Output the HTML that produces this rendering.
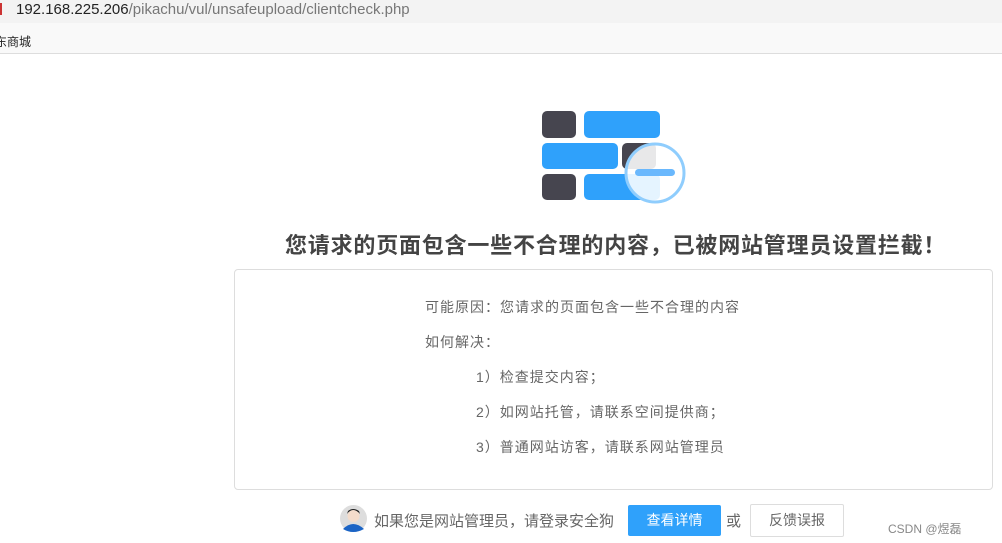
<!DOCTYPE html>
<html><head><meta charset="utf-8"><style>
*{margin:0;padding:0;box-sizing:border-box}
body{width:1002px;height:543px;background:#fff;font-family:"Liberation Sans","Noto Sans CJK SC",sans-serif;position:relative;overflow:hidden}
.a{position:absolute;white-space:nowrap}
.t{font-size:14px;color:#666;letter-spacing:1px}
</style></head><body>
<div class="a" style="left:0;top:0;width:1002px;height:23px;background:#f3f3f3"></div>
<div class="a" style="left:16px;top:1px;font-size:15px;color:#222">192.168.225.206<span style="color:#777">/pikachu/vul/unsafeupload/clientcheck.php</span></div>
<div class="a" style="left:0;top:3px;width:5px;height:12px;border-left:2px solid #c33"></div>
<div class="a" style="left:0;top:23px;width:1002px;height:31px;background:#f9f9f9;border-bottom:1px solid #ddd"></div>
<div class="a" style="left:-5px;top:33px;font-size:12px;color:#222">东商城</div>
<svg class="a" style="left:540px;top:109px" width="150" height="95">
<rect x="2" y="2" width="34" height="27" rx="5" fill="#46454f"/>
<rect x="44" y="2" width="76" height="27" rx="5" fill="#2fa1fb"/>
<rect x="2" y="34" width="76" height="26" rx="5" fill="#2fa1fb"/>
<rect x="82" y="34" width="34" height="26" rx="5" fill="#46454f"/>
<rect x="2" y="65" width="34" height="26" rx="5" fill="#46454f"/>
<rect x="44" y="65" width="76" height="26" rx="5" fill="#2fa1fb"/>
<circle cx="115" cy="64" r="29" fill="#fff" fill-opacity=".88" stroke="#8fcdfd" stroke-width="3"/>
<rect x="95" y="60" width="40" height="7" rx="3.5" fill="#6ab8fd"/>
</svg>
<div class="a" style="left:285px;top:228px;font-size:22px;font-weight:bold;color:#444;letter-spacing:0.8px">您请求的页面包含一些不合理的内容，已被网站管理员设置拦截！</div>
<div class="a" style="left:234px;top:269px;width:759px;height:221px;border:1px solid #ddd;border-radius:4px"></div>
<div class="a t" style="left:425px;top:297px">可能原因：您请求的页面包含一些不合理的内容</div>
<div class="a t" style="left:425px;top:332px">如何解决：</div>
<div class="a t" style="left:476px;top:367px">1）检查提交内容；</div>
<div class="a t" style="left:476px;top:402px">2）如网站托管，请联系空间提供商；</div>
<div class="a t" style="left:476px;top:437px">3）普通网站访客，请联系网站管理员</div>
<svg class="a" style="left:340px;top:505px" width="27" height="27"><circle cx="13.5" cy="13.5" r="13.5" fill="#ddd"/><circle cx="13.5" cy="11" r="6" fill="#f4dccb"/><path d="M7 9 Q13 1 20 9 L19 6 Q13 2 8 6Z" fill="#222"/><path d="M3 24 Q13 14 24 24 Q13 30 3 24Z" fill="#1b64c5"/></svg>
<div class="a" style="left:374px;top:510px;font-size:15px;color:#666">如果您是网站管理员，请登录安全狗</div>
<div class="a" style="left:628px;top:505px;width:93px;height:31px;background:#2fa1fb;border-radius:2px;color:#fff;font-size:14px;text-align:center;line-height:31px">查看详情</div>
<div class="a" style="left:726px;top:510px;font-size:15px;color:#666">或</div>
<div class="a" style="left:750px;top:504px;width:94px;height:33px;border:1px solid #ddd;border-radius:2px;color:#666;font-size:14px;text-align:center;line-height:31px">反馈误报</div>
<div class="a" style="left:888px;top:520px;font-size:12px;color:#888">CSDN @煜磊</div>
</body></html>
